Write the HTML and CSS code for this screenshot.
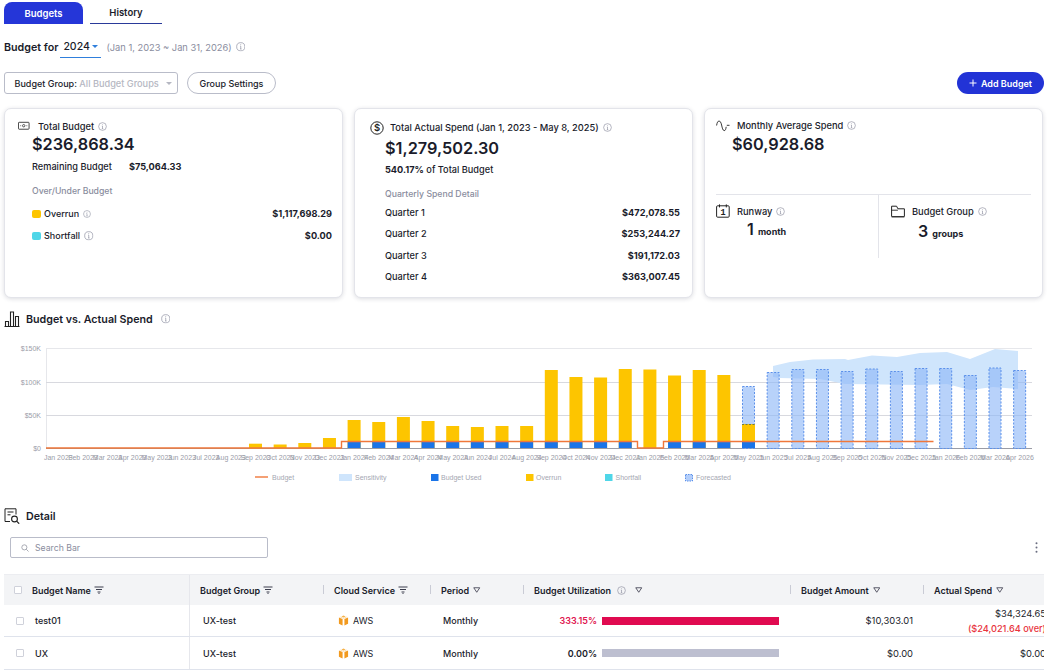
FILE: index.html
```html
<!DOCTYPE html>
<html lang="en">
<head>
<meta charset="utf-8">
<title>Budgets</title>
<link rel="stylesheet" href="styles.css">
</head>
<body>
<svg class="sprite" aria-hidden="true">
  <defs>
    <symbol id="info" viewBox="0 0 10 10"><circle cx="5" cy="5" r="4.3" fill="none" stroke="currentColor" stroke-width=".7"/><path d="M5 4.4v3M4.3 4.4H5M4.3 7.4h1.5" fill="none" stroke="currentColor" stroke-width=".7"/><circle cx="5" cy="2.9" r=".5" fill="currentColor"/></symbol>
    <symbol id="filter" viewBox="0 0 10 8"><path d="M.5 1h9M2 3.5h6M3.5 6h3M4.5 7.5h1" fill="none" stroke="currentColor" stroke-width="1"/></symbol>
    <symbol id="tri" viewBox="0 0 10 8"><path d="M1 1h8L5 7z" fill="none" stroke="currentColor" stroke-width="1.1" stroke-linejoin="round"/></symbol>
    <symbol id="cube" viewBox="0 0 12 12"><path d="M6 .5l2.3 1L6 2.6 3.7 1.5z" fill="#f6b24a"/><path d="M1 2.7l4 1.7v7L1 9.5z" fill="#f29a1f"/><path d="M11 2.7L7 4.4v7l4-1.9z" fill="#f29a1f"/><path d="M2.5 2.2L6 3.6l3.5-1.4" fill="none" stroke="#f8c06a" stroke-width=".6"/></symbol>
  </defs>
</svg>

<main class="page">
  <nav class="tabs">
    <a class="tab tab-active">Budgets</a>
    <a class="tab tab-plain">History</a>
  </nav>

  <div class="budget-for">
    <span class="bf-label">Budget for</span>
    <span class="year">2024<i class="caret caret-blue"></i></span>
    <span class="bf-range">(Jan 1, 2023 ~ Jan 31, 2026)</span>
    <svg class="ic-info ic-info-lg"><use href="#info"/></svg>
  </div>

  <div class="toolbar">
    <div class="select"><b>Budget Group:</b>&nbsp;<span class="muted-light">All Budget Groups</span><i class="caret caret-grey"></i></div>
    <button class="btn-outline">Group Settings</button>
    <button class="btn-primary"><svg class="plus" viewBox="0 0 8 8"><path d="M4 .5v7M.5 4h7" stroke="#fff" stroke-width="1" fill="none"/></svg>Add Budget</button>
  </div>

  <section class="cards">
    <article class="card card-a">
      <header class="card-head">
        <svg class="card-ic ic-note" viewBox="0 0 13 10"><rect x=".5" y="1" width="11.5" height="7.5" rx=".8" fill="none" stroke="#222" stroke-width=".9"/><circle cx="6.2" cy="4.7" r="1.3" fill="none" stroke="#222" stroke-width=".8"/><path d="M2.6 4.7h.8M9.2 4.7h.8" stroke="#222" stroke-width=".9"/></svg>
        <span>Total Budget</span><svg class="ic-info"><use href="#info"/></svg>
      </header>
      <div class="card-body">
        <div class="big">$236,868.34</div>
        <div class="remain"><span>Remaining Budget</span><b>$75,064.33</b></div>
        <div class="sub">Over/Under Budget</div>
        <div class="kv kv-first"><span class="kv-k"><i class="dot dot-y"></i>Overrun<svg class="ic-info ic-info-sm"><use href="#info"/></svg></span><b>$1,117,698.29</b></div>
        <div class="kv"><span class="kv-k"><i class="dot dot-c"></i>Shortfall<svg class="ic-info ic-info-lg"><use href="#info"/></svg></span><b>$0.00</b></div>
      </div>
    </article>

    <article class="card card-b">
      <header class="card-head head-b">
        <svg class="card-ic ic-dollar" viewBox="0 0 14 14"><circle cx="7" cy="7" r="6.2" fill="none" stroke="#222" stroke-width="1"/><text x="7" y="10.2" class="dollar-t">$</text></svg>
        <span>Total Actual Spend (Jan 1, 2023 - May 8, 2025)</span><svg class="ic-info"><use href="#info"/></svg>
      </header>
      <div class="card-body">
        <div class="big">$1,279,502.30</div>
        <div class="pct"><b>540.17%</b> of Total Budget</div>
        <div class="sub">Quarterly Spend Detail</div>
        <div class="kv q q-first"><span>Quarter 1</span><b>$472,078.55</b></div>
        <div class="kv q"><span>Quarter 2</span><b>$253,244.27</b></div>
        <div class="kv q q-wide"><span>Quarter 3</span><b>$191,172.03</b></div>
        <div class="kv q"><span>Quarter 4</span><b>$363,007.45</b></div>
      </div>
    </article>

    <article class="card card-c">
      <header class="card-head head-c">
        <svg class="card-ic ic-wave" viewBox="0 0 14 12"><path d="M.6 5.5C1 2.5 2 1 3 1s2 1.2 2.6 4 1.2 5.6 2.6 5.6S9.8 9 10.2 6.8" fill="none" stroke="#222" stroke-width=".9"/><path d="M10.8 5.3h2.7" stroke="#222" stroke-width=".9"/></svg>
        <span>Monthly Average Spend</span><svg class="ic-info"><use href="#info"/></svg>
      </header>
      <div class="big big-c">$60,928.68</div>
      <div class="split">
        <div class="split-a">
          <div class="card-head">
            <svg class="card-ic ic-cal" viewBox="0 0 14 14"><rect x=".6" y="1.8" width="12.6" height="11.4" rx="1" fill="none" stroke="#222" stroke-width="1"/><path d="M3.5 .4v3M10.3 .4v3" stroke="#222" stroke-width="1"/><text x="7" y="11" class="cal-t">1</text></svg>
            <span>Runway</span><svg class="ic-info"><use href="#info"/></svg>
          </div>
          <div class="stat stat-a"><span class="stat-n">1</span> month</div>
        </div>
        <div class="split-b">
          <div class="card-head">
            <svg class="card-ic ic-folder" viewBox="0 0 14 13"><path d="M.6 11.5V1.2h5l1.3 2.6h6.5v7.7z" fill="none" stroke="#222" stroke-width="1"/><path d="M.6 5.2h6.3" stroke="#222" stroke-width=".9"/><path d="M.6 12.3h12.8" stroke="#888" stroke-width="1"/></svg>
            <span>Budget Group</span><svg class="ic-info"><use href="#info"/></svg>
          </div>
          <div class="stat stat-b"><span class="stat-n">3</span> groups</div>
        </div>
      </div>
    </article>
  </section>

  <h2 class="section-title chart-title">
    <svg class="sec-ic" viewBox="0 0 16 16"><path d="M.5 15.5h15M1.5 15.5v-5h3v5M6.5 15.5V1h3v14.5M11.5 15.5V5.5h3v10" fill="none" stroke="#222" stroke-width="1.1"/></svg>
    Budget vs. Actual Spend
    <svg class="ic-info ic-info-title"><use href="#info"/></svg>
  </h2>

  <svg class="chart" viewBox="0 0 1050 172" aria-label="Budget vs. Actual Spend chart">
    <g class="ylabels">
      <text x="41" y="18">$150K</text><text x="41" y="52">$100K</text><text x="41" y="85">$50K</text><text x="41" y="118">$0</text>
    </g>
    <path class="grid-top" d="M46.5 15v100M46 15.5h986"/>
    <path class="grid" d="M46 49.5h986M46 82.5h986"/>
    <path class="axis" d="M46 115.5h986"/>

    <polygon class="sens" points="773,33 790,29 813,26.5 845,26 848,27 872,22.5 897,24 920,20 947,19 970,26 995,16 1018,18 1018,56 993,54 970,57 947,51 920,52 845,51 820,46 780,45 773,44"/>

    <g class="yellow">
      <rect x="249" y="110.7" width="13" height="4.8"/><rect x="273.65" y="111.5" width="13" height="4"/><rect x="298.3" y="110" width="13" height="5.5"/><rect x="322.95" y="105" width="13" height="10.5"/>
      <rect x="347.6" y="87" width="13" height="28"/><rect x="372.25" y="89" width="13" height="26"/><rect x="396.9" y="84" width="13" height="31"/><rect x="421.55" y="88" width="13" height="27"/>
      <rect x="446.2" y="93" width="13" height="22"/><rect x="470.85" y="94" width="13" height="21"/><rect x="495.5" y="93" width="13" height="22"/><rect x="520.15" y="93" width="13" height="22"/>
      <rect x="544.8" y="37" width="13" height="78"/><rect x="569.45" y="44" width="13" height="71"/><rect x="594.1" y="44.5" width="13" height="70.5"/><rect x="618.75" y="36" width="13" height="79"/>
      <rect x="643.4" y="36.5" width="13" height="78.5"/><rect x="668.05" y="42.5" width="13" height="72.5"/><rect x="692.7" y="37" width="13" height="78"/><rect x="717.35" y="42" width="13" height="73"/>
    </g>

    <g class="fore">
      <rect x="742.5" y="53.5" width="12" height="62"/>
      <rect x="767.15" y="39.5" width="12" height="76"/><rect x="791.8" y="36.5" width="12" height="79"/><rect x="816.45" y="36.5" width="12" height="79"/><rect x="841.1" y="38.5" width="12" height="77"/>
      <rect x="865.75" y="36" width="12" height="79.5"/><rect x="890.4" y="38.5" width="12" height="77"/><rect x="915.05" y="35.5" width="12" height="80"/><rect x="939.7" y="35.5" width="12" height="80"/>
      <rect x="964.35" y="42.5" width="12" height="73"/><rect x="989" y="35" width="12" height="80.5"/><rect x="1013.65" y="37.5" width="12" height="78"/>
    </g>
    <rect class="yellow-solid" x="742" y="91" width="13" height="24"/>
    <path class="yellow-dash" d="M742 91.5h13"/>

    <g class="blue">
      <rect x="347.6" y="109" width="13" height="6"/><rect x="372.25" y="109" width="13" height="6"/><rect x="396.9" y="109" width="13" height="6"/><rect x="421.55" y="109" width="13" height="6"/>
      <rect x="446.2" y="109" width="13" height="6"/><rect x="470.85" y="109" width="13" height="6"/><rect x="495.5" y="109" width="13" height="6"/><rect x="520.15" y="109" width="13" height="6"/>
      <rect x="544.8" y="109" width="13" height="6"/><rect x="569.45" y="109" width="13" height="6"/><rect x="594.1" y="109" width="13" height="6"/><rect x="618.75" y="109" width="13" height="6"/>
      <rect x="668.05" y="109" width="13" height="6"/><rect x="692.7" y="109" width="13" height="6"/><rect x="717.35" y="109" width="13" height="6"/><rect x="742" y="109" width="13" height="6"/>
    </g>

    <path class="budget" d="M46 115H341.5V108.5H637.5V115H663.5V108.5H933.5"/>

    <g class="xlabels">
      <text x="58.3" y="127">Jan 2023</text><text x="82.95" y="127">Feb 2023</text><text x="107.6" y="127">Mar 2023</text><text x="132.25" y="127">Apr 2023</text><text x="156.9" y="127">May 2023</text><text x="181.55" y="127">Jun 2023</text><text x="206.2" y="127">Jul 2023</text><text x="230.85" y="127">Aug 2023</text>
      <text x="255.5" y="127">Sep 2023</text><text x="280.15" y="127">Oct 2023</text><text x="304.8" y="127">Nov 2023</text><text x="329.45" y="127">Dec 2023</text><text x="354.1" y="127">Jan 2024</text><text x="378.75" y="127">Feb 2024</text><text x="403.4" y="127">Mar 2024</text><text x="428.05" y="127">Apr 2024</text>
      <text x="452.7" y="127">May 2024</text><text x="477.35" y="127">Jun 2024</text><text x="502" y="127">Jul 2024</text><text x="526.65" y="127">Aug 2024</text><text x="551.3" y="127">Sep 2024</text><text x="575.95" y="127">Oct 2024</text><text x="600.6" y="127">Nov 2024</text><text x="625.25" y="127">Dec 2024</text>
      <text x="649.9" y="127">Jan 2025</text><text x="674.55" y="127">Feb 2025</text><text x="699.2" y="127">Mar 2025</text><text x="723.85" y="127">Apr 2025</text><text x="748.5" y="127">May 2025</text><text x="773.15" y="127">Jun 2025</text><text x="797.8" y="127">Jul 2025</text><text x="822.45" y="127">Aug 2025</text>
      <text x="847.1" y="127">Sep 2025</text><text x="871.75" y="127">Oct 2025</text><text x="896.4" y="127">Nov 2025</text><text x="921.05" y="127">Dec 2025</text><text x="945.7" y="127">Jan 2026</text><text x="970.35" y="127">Feb 2026</text><text x="995" y="127">Mar 2026</text><text x="1019.65" y="127">Apr 2026</text>
    </g>

    <g class="legend">
      <path class="budget" d="M255 144h13"/><text x="272" y="147">Budget</text>
      <rect class="sens" x="339" y="141" width="13" height="7"/><text x="355" y="147">Sensitivity</text>
      <rect class="lg-blue" x="431" y="141" width="7.5" height="7"/><text x="441" y="147">Budget Used</text>
      <rect class="lg-yellow" x="526" y="141" width="7.5" height="7"/><text x="536" y="147">Overrun</text>
      <rect class="lg-cyan" x="605" y="141" width="7.5" height="7"/><text x="615.5" y="147">Shortfall</text>
      <rect class="lg-fore" x="685.5" y="141.5" width="7" height="6.5"/><text x="696" y="147">Forecasted</text>
    </g>
  </svg>

  <h2 class="section-title detail-title">
    <svg class="sec-ic" viewBox="0 0 16 16"><path d="M6 13.5H1V.8h11v5.7" fill="none" stroke="#222" stroke-width="1"/><path d="M3.5 4h6M3.5 6.8h3" stroke="#222" stroke-width="1"/><circle cx="10.5" cy="11" r="2.9" fill="none" stroke="#222" stroke-width="1.1"/><path d="M12.6 13.1l2.6 2.6" stroke="#222" stroke-width="1.2"/></svg>
    Detail
  </h2>

  <div class="search-row">
    <div class="search">
      <svg class="search-ic" viewBox="0 0 10 10"><circle cx="4.2" cy="4.2" r="3.2" fill="none" stroke="#8a8d99" stroke-width=".9"/><path d="M6.6 6.6l2.8 2.8" stroke="#8a8d99" stroke-width=".9"/></svg>
      Search Bar
    </div>
    <svg class="kebab" viewBox="0 0 3 11"><circle cx="1.5" cy="1.3" r="1"/><circle cx="1.5" cy="5.5" r="1"/><circle cx="1.5" cy="9.7" r="1"/></svg>
  </div>

  <div class="table">
    <div class="tr th">
      <div class="cell c1"><i class="check"></i><span class="th-name">Budget Name</span><svg class="ic-filter"><use href="#filter"/></svg></div>
      <div class="cell c2">Budget Group<svg class="ic-filter"><use href="#filter"/></svg></div>
      <div class="cell c3 sep">Cloud Service<svg class="ic-filter"><use href="#filter"/></svg></div>
      <div class="cell c4 sep">Period<svg class="ic-tri"><use href="#tri"/></svg></div>
      <div class="cell c5 sep">Budget Utilization<svg class="ic-info ic-info-th"><use href="#info"/></svg><svg class="ic-tri ic-tri-wide"><use href="#tri"/></svg></div>
      <div class="cell c6 sep">Budget Amount<svg class="ic-tri"><use href="#tri"/></svg></div>
      <div class="cell c7 sep">Actual Spend<svg class="ic-tri"><use href="#tri"/></svg></div>
    </div>
    <div class="tr td">
      <div class="cell c1"><i class="check check-row"></i><span class="td-name">test01</span></div>
      <div class="cell c2"><span class="td-group">UX-test</span></div>
      <div class="cell c3"><svg class="ic-cube"><use href="#cube"/></svg>AWS</div>
      <div class="cell c4"><span class="td-period">Monthly</span></div>
      <div class="cell c5"><span class="util util-over">333.15%</span><i class="bar bar-over"></i></div>
      <div class="cell c6 right">$10,303.01</div>
      <div class="cell c7 right stack"><span>$34,324.65</span><span class="over">($24,021.64 over)</span></div>
    </div>
    <div class="tr td">
      <div class="cell c1"><i class="check check-row"></i><span class="td-name">UX</span></div>
      <div class="cell c2"><span class="td-group">UX-test</span></div>
      <div class="cell c3"><svg class="ic-cube"><use href="#cube"/></svg>AWS</div>
      <div class="cell c4"><span class="td-period">Monthly</span></div>
      <div class="cell c5"><span class="util">0.00%</span><i class="bar bar-zero"></i></div>
      <div class="cell c6 right">$0.00</div>
      <div class="cell c7 right">$0.00</div>
    </div>
  </div>
</main>
</body>
</html>
```

FILE: styles.css
```css
* { box-sizing: border-box; }
html, body { margin: 0; padding: 0; height: 672px; overflow: hidden; background: #fff; }
body { font-family: Inter, "Liberation Sans", sans-serif; color: #1a1c2b; font-size: 9.2px; font-weight: 500; }
.sprite { position: absolute; width: 0; height: 0; }
.page { width: 1050px; height: 672px; padding: 2px 6px 0 4px; overflow: hidden; }
b { font-weight: 700; }

/* tabs */
.tabs { display: flex; gap: 7px; height: 22px; }
.tab { display: flex; align-items: center; justify-content: center; font-size: 9.5px; font-weight: 600; }
.tab-active { width: 79px; background: #2536d8; color: #fff; border-radius: 8px 8px 0 0; padding-top: 1px; }
.tab-plain { width: 72px; border-bottom: 1px solid #2a3a9a; }

/* budget for */
.budget-for { display: flex; align-items: center; height: 22px; margin-top: 12px; }
.bf-label { font-size: 10.7px; font-weight: 600; padding-top: 1px; }
.year { display: flex; align-items: center; gap: 2px; width: 41px; height: 22px; margin-left: 2px; padding-left: 3px; font-size: 10.5px; font-weight: 500; border-bottom: 1px solid #2f7fdc; }
.caret { display: block; width: 0; height: 0; border-left: 3px solid transparent; border-right: 3px solid transparent; }
.caret-blue { border-top: 3px solid #2f7fdc; }
.caret-grey { border-top: 3px solid #b5b7c2; margin-left: 7px; }
.bf-range { margin-left: 5px; font-size: 9.3px; font-weight: 400; color: #8a8d9e; padding-top: 1px; }
.ic-info { width: 9px; height: 9px; color: #8a8d9e; margin-left: 4px; flex: none; }
.ic-info-lg { width: 9.5px; height: 9.5px; }
.ic-info-sm { width: 8px; height: 8px; }

/* toolbar */
.toolbar { display: flex; align-items: center; height: 22px; margin-top: 14px; }
.select { display: flex; align-items: center; width: 174px; height: 22px; padding-left: 9.5px; border: 1px solid #b9bcc9; border-radius: 3px; font-size: 9px; }
.select b { font-weight: 500; }
.muted-light { color: #b5b7c2; font-size: 9.2px; }
.btn-outline { width: 89px; height: 22px; margin-left: 9px; padding: 0; border: 1px solid #b9bcc9; border-radius: 11px; background: #fff; color: #1a1c2b; font: 500 9px Inter, sans-serif; }
.btn-primary { display: flex; align-items: center; justify-content: center; gap: 4px; width: 87px; height: 22px; margin-left: auto; padding: 0; border: 0; border-radius: 11px; background: #2233d6; color: #fff; font: 600 9px Inter, sans-serif; }
.plus { width: 8px; height: 8px; }

/* cards */
.cards { display: flex; gap: 11px; margin-top: 14px; }
.card { position: relative; width: 339px; height: 190px; border: 1px solid #e3e4ea; border-radius: 7px; background: #fff; box-shadow: 0 1px 4px rgba(40, 44, 70, .16); padding: 11px 10px 0 13px; }
.card-head { display: flex; align-items: center; height: 12px; font-size: 9.3px; font-weight: 500; }
.card-ic { flex: none; margin-right: 8px; }
.ic-note { width: 12px; height: 10px; }
.card-body { padding-left: 14px; }
.big { font-size: 16.3px; font-weight: 600; line-height: 22px; margin-top: 1px; }
.remain { display: flex; gap: 17px; margin-top: 6px; line-height: 12px; }
.sub { margin-top: 12px; line-height: 12px; color: #8a8d9e; font-size: 8.7px; font-weight: 500; }
.kv { display: flex; justify-content: space-between; align-items: center; line-height: 12px; margin-top: 10px; }
.kv-first { margin-top: 11px; }
.kv-k { display: flex; align-items: center; font-size: 9px; }
.dot { width: 9px; height: 8.5px; border-radius: 2px; margin-right: 3px; }
.dot-y { background: #fdc500; }
.dot-c { background: #4fd6e8; }

.head-b { padding-left: 2px; height: 15px; }
.ic-dollar { width: 14px; height: 14px; margin-right: 6px; }
.dollar-t { font: 600 9.5px Inter, sans-serif; text-anchor: middle; fill: #222; }
.card-b .card-body { padding-left: 17px; }
.card-b .big { margin-top: 2px; }
.card-b { padding-right: 12px; }
.pct { margin-top: 5px; line-height: 12px; }
.q { margin-top: 9px; }
.q-wide { margin-top: 10px; }
.q-first { margin-top: 7px; }

.card-c { padding: 10px 11px 0 11px; }
.head-c { height: 13px; }
.ic-wave { width: 14px; height: 12px; margin-right: 7px; }
.big-c { margin-left: 16px; }
.split { display: flex; height: 64px; margin-top: 39px; border-top: 1px solid #e3e4ea; }
.split-a { width: 163px; border-right: 1px solid #e3e4ea; padding-top: 10px; }
.split-b { flex: 1; padding: 10px 0 0 12px; }
.ic-cal { width: 14px; height: 14px; margin-right: 7px; }
.ic-folder { width: 14px; height: 13px; margin-right: 7px; }
.cal-t { font: 600 8.5px "Liberation Mono", monospace; text-anchor: middle; fill: #222; }
.stat { font-size: 9px; font-weight: 700; line-height: 18px; }
.stat-n { font-size: 16px; font-weight: 600; margin-right: 2px; }
.stat-a { margin: 3px 0 0 31px; }
.stat-b { margin: 5px 0 0 27px; }

/* section titles */
.section-title { display: flex; align-items: center; margin: 0; font-size: 10.7px; font-weight: 600; color: #1a1c2b; height: 16px; }
.sec-ic { width: 16px; height: 16px; margin-right: 6px; flex: none; }
.chart-title { margin-top: 13px; }
.ic-info-title { width: 9.5px; height: 9.5px; margin-left: 8px; }
.detail-title { margin-top: 3px; }

/* chart */
.chart { display: block; width: 1050px; height: 172px; margin: 6px 0 0 -4px; font-family: "Liberation Sans", Arial, sans-serif; }
.grid-top { fill: none; stroke: #e6e7eb; stroke-width: 1; }
.grid { fill: none; stroke: #d8d9df; stroke-width: 1; }
.axis { fill: none; stroke: #9a9ca6; stroke-width: 1; }
.ylabels text { font-size: 7px; fill: #9a9ca8; text-anchor: end; }
.xlabels text { font-size: 7px; fill: #9a9ca8; text-anchor: middle; }
.legend text { font-size: 7px; fill: #a5a7b2; }
.sens { fill: #cfe5fc; }
.yellow rect, .yellow-solid { fill: #fdc500; }
.fore rect { fill: #8db6f7; fill-opacity: .62; stroke: #5b90ea; stroke-width: 1; stroke-dasharray: 2 1.5; }
.yellow-dash { stroke: #6a7a50; stroke-width: 1; stroke-dasharray: 2 1.5; }
.blue rect { fill: #1a74e8; }
.budget { fill: none; stroke: #f0773a; stroke-width: 1.4; }
.lg-blue { fill: #1a74e8; }
.lg-yellow { fill: #fdc500; }
.lg-cyan { fill: #4fd6e8; }
.lg-fore { fill: #b3cefa; stroke: #5b90ea; stroke-width: 1; stroke-dasharray: 1.5 1; }

/* search */
.search-row { display: flex; align-items: center; height: 21px; margin-top: 13px; padding-left: 6px; }
.search { display: flex; align-items: center; width: 258px; height: 21px; padding-left: 10px; border: 1px solid #b9bcc9; border-radius: 2px; font-size: 8.7px; font-weight: 400; color: #8a8d9e; }
.search-ic { width: 8px; height: 8px; margin-right: 6px; }
.kebab { width: 3px; height: 11px; margin-left: auto; margin-right: 6px; fill: #6a6d80; }

/* table */
.table { width: 1040px; margin-top: 16px; overflow: hidden; }
.tr { display: grid; grid-template-columns: 186px 133px 107px 93px 267px 133px 130px; width: 1049px; }
.th { height: 31px; background: #f3f4f6; border-top: 1px solid #ecedf1; font-size: 9px; font-weight: 600; }
.td { height: 33px; border-bottom: 1px solid #dfe3ec; font-size: 9px; font-weight: 400; }
.td:nth-child(2) { height: 32px; }
.cell { position: relative; display: flex; align-items: center; min-width: 0; white-space: nowrap; }
.c1 { padding-left: 10px; border-right: 1px solid #e6e7ec; }
.c2, .c3, .c4, .c5, .c6, .c7 { padding-left: 10px; }
.th .c3, .th .c4, .th .c5, .th .c6, .th .c7 { padding-left: 11px; }
.sep::before { content: ""; position: absolute; left: 0; top: 10px; height: 9px; width: 1px; background: #c9cbd5; }
.check { flex: none; display: block; width: 8px; height: 8px; background: #fff; border: 1px solid #cfd1da; border-radius: 1px; }
.check-row { margin: 0 1px 0 2px; }
.th-name { margin-left: 10px; }
.td-name { margin-left: 10px; font-weight: 500; }
.ic-filter { width: 10px; height: 8px; margin-left: 3px; color: #3a3c4c; }
.ic-tri { width: 7.5px; height: 6px; margin-left: 4px; color: #3a3c4c; }
.ic-tri-wide { margin-left: 9px; }
.ic-info-th { margin-left: 6px; width: 9px; height: 9px; }
.td-group { margin-left: 3px; font-weight: 500; }
.ic-cube { width: 11px; height: 11px; margin: 0 4px 0 5px; }
.td-period { margin-left: 3px; font-weight: 500; }
.td .c5 { padding-left: 0; }
.util { width: 74px; text-align: right; font-weight: 600; margin-right: 5px; }
.util-over { color: #e0144f; }
.bar { flex: none; display: block; width: 177px; height: 8px; }
.bar-over { background: #e00a50; }
.bar-zero { background: #bdbfd0; }
.right { justify-content: flex-end; padding-right: 10px; font-size: 9.4px; }
.c7.right { padding-right: 7px; }
.stack { flex-direction: column; align-items: flex-end; justify-content: center; gap: 4px; }
.over { color: #e8333d; font-size: 9.2px; font-weight: 500; }
```
